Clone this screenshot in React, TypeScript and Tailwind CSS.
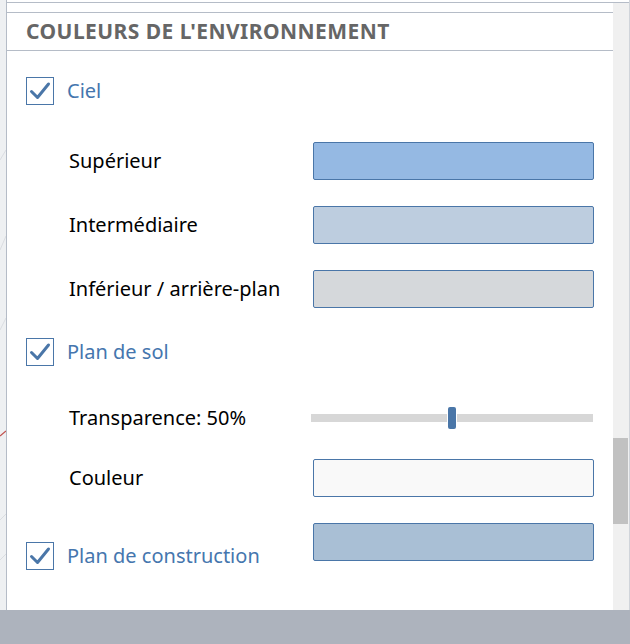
import React from 'react';

const font = { fontFamily: '"Noto Sans", "Open Sans", sans-serif' };

function CheckBox() {
  return (
    <span className="flex h-[28px] w-[28px] shrink-0 items-center justify-center border border-[#4a76a8] bg-white">
      <svg width="22" height="22" viewBox="0 0 22 22" fill="none">
        <path d="M2.5 11.5 L8.5 17.5 L19.5 4" stroke="#4a76a8" strokeWidth="3" strokeLinecap="round" strokeLinejoin="round" />
      </svg>
    </span>
  );
}

function ColorBox({ color }: { color: string }) {
  return <div className={`h-[38px] w-[281px] rounded-[2px] border border-[#4a76a8] ${color}`} />;
}

function ColorRow({ label, color, top }: { label: string; color: string; top: string }) {
  return (
    <div className={`flex items-center ${top}`}>
      <span className="w-[287px] pl-[43px] text-[20px] text-black">{label}</span>
      <ColorBox color={color} />
    </div>
  );
}

function CheckRow({ label, top }: { label: string; top: string }) {
  return (
    <div className={`flex h-[28px] items-center gap-[13px] ${top}`}>
      <CheckBox />
      <span className="text-[20px] text-[#4576ae]">{label}</span>
    </div>
  );
}

export default function App() {
  return (
    <div className="flex h-[644px] w-[630px] flex-col overflow-hidden bg-white" style={font}>
      <div className="flex min-h-0 flex-1">
        {/* viewport edge */}
        <div className="w-[6px] shrink-0 bg-[#eef0f2]">
          <svg width="6" height="610" viewBox="0 0 6 610">
            <path d="M0 160 L6 150 M0 250 L6 236 M0 330 L6 318 M0 520 L6 514 M0 560 L6 554" stroke="#dadde1" strokeWidth="1" />
            <path d="M0 436 L6 431" stroke="#c0504d" strokeWidth="1.2" />
          </svg>
        </div>
        <div className="w-px shrink-0 bg-[#b5bcc7]" />

        <div className="flex min-w-0 flex-1 flex-col">
          <div className="h-[2px] bg-white" />
          <div className="h-px bg-[#b5bcc7]" />
          <div className="flex min-h-0 flex-1">
            <div className="flex min-w-0 flex-1 flex-col">
              <div className="h-[9px]" />
              <div className="h-px bg-[#b5bcc7]" />
              <div className="flex h-[37px] items-center pl-[19px]">
                <span className="text-[21px] font-bold tracking-[0.45px] text-[#666666]">COULEURS DE L'ENVIRONNEMENT</span>
              </div>
              <div className="h-px bg-[#b5bcc7]" />

              <div className="flex flex-col pl-[19px]">
                <CheckRow label="Ciel" top="mt-[26px]" />
                <ColorRow label="Supérieur" color="bg-[#95b9e3]" top="mt-[37px]" />
                <ColorRow label="Intermédiaire" color="bg-[#bdcddf]" top="mt-[26px]" />
                <ColorRow label="Inférieur / arrière-plan" color="bg-[#d5d8db]" top="mt-[26px]" />
                <CheckRow label="Plan de sol" top="mt-[30px]" />

                <div className="mt-[41px] flex h-[22px] items-center">
                  <span className="w-[285px] pl-[43px] text-[20px] text-black">Transparence: 50%</span>
                  <div className="flex h-[22px] w-[282px] items-center">
                    <div className="h-[8px] w-[136px] bg-[#d7d7d7]" />
                    <div className="w-px" />
                    <div className="h-[22px] w-[8px] rounded-[2px] bg-[#4a76a8]" />
                    <div className="w-px" />
                    <div className="h-[8px] flex-1 bg-[#d7d7d7]" />
                  </div>
                </div>

                <ColorRow label="Couleur" color="bg-[#f9f9f9]" top="mt-[30px]" />

                <div className="mt-[26px] flex items-start">
                  <div className="mt-[18px] flex w-[287px] items-center gap-[13px]">
                    <CheckBox />
                    <span className="text-[20px] text-[#4576ae]">Plan de construction</span>
                  </div>
                  <ColorBox color="bg-[#a9bfd5]" />
                </div>
              </div>
            </div>

            {/* scrollbar */}
            <div className="flex w-[16px] shrink-0 flex-col bg-[#f0f0f0]">
              <div className="h-[435px]" />
              <div className="h-[86px] w-[15px] bg-[#c1c1c1]" />
            </div>
          </div>
        </div>
        <div className="w-px shrink-0 bg-[#d0d4da]" />
      </div>
      <div className="h-[34px] shrink-0 bg-[#adb3bd]" />
    </div>
  );
}
